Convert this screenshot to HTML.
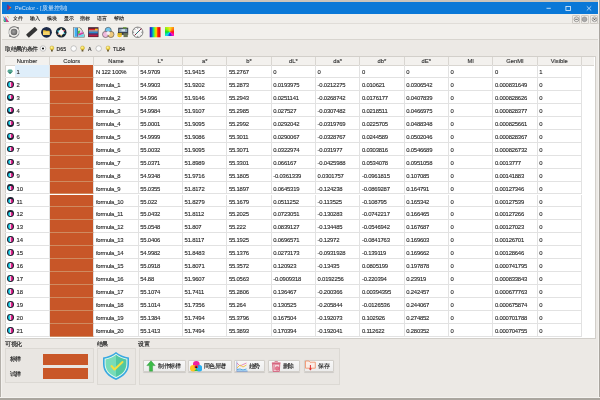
<!DOCTYPE html>
<html><head><meta charset="utf-8"><style>
html,body{margin:0;padding:0}
body{-webkit-text-stroke:0.13px currentColor;width:600px;height:400px;overflow:hidden;background:#c9c4bc;position:relative;font-family:"Liberation Sans",sans-serif;color:#1e1e1e}
#win{position:absolute;left:0;top:0;width:600px;height:400px;background:#ece9e5;overflow:hidden;will-change:transform}
.bd{position:absolute}
.abs{position:absolute}
#title{position:absolute;left:1.5px;top:1.5px;width:596.3px;height:12px;background:#0a78d7}
#title .t{-webkit-text-stroke:0;position:absolute;left:13.5px;top:3.6px;font-size:5.55px;color:#d8e8f8;white-space:nowrap;line-height:6px}
#menubar{position:absolute;left:1.5px;top:13.5px;width:597px;height:9.5px;background:#f0eeea;border-bottom:1px solid #e0ddd8}
.mi{position:absolute;top:2.5px;font-size:4.9px;line-height:5px;color:#222;white-space:nowrap}
#toolbar{position:absolute;left:1.5px;top:24px;width:596px;height:14.5px;background:#f2f0ec;border-bottom:1px solid #d8d5cf}
#tbl{position:absolute;left:0;top:0}
.frame{position:absolute;left:4.5px;top:56px;width:589px;height:280.5px;background:#fff;border:1px solid #d2cfca}
.hbar{position:absolute;left:5px;top:56.5px;width:589px;height:8.5px;background:#f3f1ee;border-bottom:1px solid #d9d6d1}
.hc{position:absolute;top:56.5px;height:8.5px;box-sizing:border-box;border-right:1px solid #d9d6d1;font-size:5.8px;line-height:8.7px;text-align:center;color:#333;white-space:nowrap}
.rw{position:absolute;left:5px;height:12.95px;width:589px}
.rw::after{content:"";position:absolute;left:0;top:11.95px;width:10px;height:1px;background:#e6e6e6}
.c{position:absolute;top:0;height:12.95px;box-sizing:border-box;border-right:1px solid #e2e2e2;border-bottom:1px solid #e2e2e2;font-size:5.5px;line-height:12.95px;padding-left:2px;white-space:nowrap;overflow:hidden;color:#2a2a2a;-webkit-text-stroke:0.12px #2a2a2a}
.sw{background:#c85628;border-bottom-color:#cf8a60}
.sel{background:#dfeefa}
.mdi{position:absolute;top:1.75px;width:6.4px;height:6.4px;border:0.5px solid #cfcbc5;border-radius:1px;background:#eeece8}
.mdi svg{position:absolute;left:-0.2px;top:-0.2px}
.opt{position:absolute;line-height:6px;letter-spacing:-0.62px;white-space:nowrap;color:#222}
.opt2{position:absolute;font-size:5.2px;line-height:5px;white-space:nowrap;color:#222}
.lbl{position:absolute;font-size:6px;letter-spacing:-0.5px;line-height:6px;white-space:nowrap;color:#2a2a2a;-webkit-text-stroke:0.16px #2a2a2a}
.grp{position:absolute;box-sizing:border-box;border:1px solid #dcd9d4;background:#e9e6e2}
.btn{position:absolute;top:359.6px;height:12.9px;box-sizing:border-box;border:0.8px solid #d2cfca;box-shadow:0 0.5px 0.8px rgba(0,0,0,0.12);border-radius:1px;background:linear-gradient(#f8f8f8,#ececec)}
.bt{position:absolute;top:362.6px;font-size:6px;letter-spacing:-0.45px;line-height:6px;white-space:nowrap;color:#222}
.rw i{position:absolute;left:1.5px;top:3.5px;width:7px;height:6px}
.gem{background:none}
.rw i.gem::before{content:"";position:absolute;left:0.6px;top:0.9px;width:6px;height:1.8px;background:#4aa890;clip-path:polygon(25% 0,75% 0,100% 100%,0 100%)}
.rw i.gem::after{content:"";position:absolute;left:0.6px;top:2.7px;width:6px;height:3px;background:#2e8a74;clip-path:polygon(0 0,100% 0,50% 100%)}
.rw i.ball{left:2.1px;top:2.9px;width:6.9px;height:6.9px;border-radius:50%;background:#1a2230}
.rw i.ball::before{content:"";position:absolute;left:1.2px;top:1.2px;width:4.5px;height:4.5px;border-radius:50%;background:linear-gradient(90deg,#2090c0 0,#20e0f0 30%,#30d0e8 45%,#f8c0e0 50%,#f02898 60%,#c01070 100%)}
.rw i.ball::after{content:"";position:absolute;left:2.9px;top:3.4px;width:1.2px;height:1.8px;border-radius:50%;background:#e8d0ec}

.c b{display:inline-block;font-weight:normal;font-size:5.9px;letter-spacing:-0.2px;transform:translate(-0.4px,0.5px)}

</style></head><body>
<div id="win">
<div class="bd" style="left:0;top:0;width:600px;height:1.5px;background:#c9c4bc"></div>
<div class="bd" style="left:0;top:0;width:2px;height:400px;background:#b4b0aa;border-right:1px solid #f4f2ef;box-sizing:border-box"></div>
<div class="bd" style="left:597.8px;top:0;width:2.2px;height:400px;background:#a9a59f;border-left:0.8px solid #f4f2ef;box-sizing:border-box"></div>
<div class="bd" style="left:0;top:397.3px;width:600px;height:2.7px;background:#aaa69f;border-top:0.9px solid #f4f2ef;box-sizing:border-box"></div>
<div id="title">
<svg class="abs" style="left:4.8px;top:2.2px" width="6" height="7" viewBox="0 0 6 7"><path d="M1.2 0.6 L5.4 3.5 L1.2 6.4 Z" fill="#e02830"/><path d="M1.2 0.6 L2.6 1.6 L2.6 5.4 L1.2 6.4 Z" fill="#4a3aa0"/><path d="M3.8 2.4 L5.4 3.5 L3.8 4.6 Z" fill="#f09020"/></svg>
<div class="t">PeColor - [质量控制]</div>
<svg class="abs" style="left:524px;top:2px" width="72" height="9" viewBox="0 0 72 9">
<path d="M20.5 4.3 H24.8" stroke="#e8f2fc" stroke-width="0.8"/>
<rect x="39.9" y="2.4" width="4.6" height="4.1" fill="none" stroke="#e8f2fc" stroke-width="0.8"/>
<path d="M60.8 2.3 L65.2 6.5 M65.2 2.3 L60.8 6.5" stroke="#e8f2fc" stroke-width="0.75"/>
</svg>
</div>
<div id="menubar">
<svg class="abs" style="left:0;top:1.5px" width="8" height="8" viewBox="0 0 8 8"><path d="M1 1 L3 7 L7 7 Z" fill="#2a8ad0"/><path d="M3 1 L7 7 L4 7 Z" fill="#d04080"/><path d="M1 4 L4 7 L2 7 Z" fill="#40b060"/><path d="M5 1 L7 4 L6 1 Z" fill="#e0a030"/></svg>
<span class="mi" style="left:11.5px">文件</span>
<span class="mi" style="left:28.5px">输入</span>
<span class="mi" style="left:45.2px">模块</span>
<span class="mi" style="left:62.2px">显示</span>
<span class="mi" style="left:78.8px">指标</span>
<span class="mi" style="left:95.5px">语言</span>
<span class="mi" style="left:112px">帮助</span>
<div class="mdi" style="left:570.6px"><svg width="7" height="7" viewBox="0 0 7 7"><circle cx="3.5" cy="3.3" r="2.4" fill="none" stroke="#555" stroke-width="0.5"/><path d="M2.2 3.3 H4.8" stroke="#333" stroke-width="0.7"/></svg></div>
<div class="mdi" style="left:579.1px"><svg width="7" height="7" viewBox="0 0 7 7"><circle cx="3.5" cy="3.3" r="2.4" fill="#aaa" stroke="#777" stroke-width="0.5"/></svg></div>
<div class="mdi" style="left:588.5px"><svg width="7" height="7" viewBox="0 0 7 7"><circle cx="3.5" cy="3.3" r="2.4" fill="none" stroke="#666" stroke-width="0.5"/><path d="M2.4 2.2 L4.6 4.4 M4.6 2.2 L2.4 4.4" stroke="#333" stroke-width="0.7"/></svg></div>
</div>
<div id="toolbar">
<svg class="abs" style="left:-1.5px;top:-0.5px" width="180" height="15" viewBox="0 23.5 180 15">
<defs>
<radialGradient id="g1" cx="0.45" cy="0.45" r="0.6"><stop offset="0" stop-color="#a0a0a0"/><stop offset="1" stop-color="#5e5e5e"/></radialGradient>
<linearGradient id="rb" x1="0" y1="0" x2="1" y2="0"><stop offset="0" stop-color="#3a10b0"/><stop offset="0.15" stop-color="#1040e0"/><stop offset="0.35" stop-color="#10e090"/><stop offset="0.5" stop-color="#b0f000"/><stop offset="0.62" stop-color="#ffd000"/><stop offset="0.75" stop-color="#ff2010"/><stop offset="1" stop-color="#e00010"/></linearGradient>
</defs>
<!-- 1 refresh -->
<path d="M17.6 27.6 A5.2 5.2 0 0 0 9.1 29.8" fill="none" stroke="#8a8a8a" stroke-width="1.1"/>
<path d="M10.4 35.4 A5.2 5.2 0 0 0 18.9 33.2" fill="none" stroke="#8a8a8a" stroke-width="1.1"/><path d="M9.1 29.8 A5.2 5.2 0 0 0 10.4 35.4" fill="none" stroke="#b0b0b0" stroke-width="0.9"/><path d="M18.9 33.2 A5.2 5.2 0 0 0 17.6 27.6" fill="none" stroke="#b0b0b0" stroke-width="0.9"/>
<path d="M16.8 26.4 L19 26.9 L18.2 29 Z" fill="#555"/>
<path d="M11.2 36.6 L9 36.1 L9.8 34 Z" fill="#555"/>
<circle cx="14" cy="31.5" r="3.3" fill="url(#g1)"/>
<!-- 2 bar -->
<rect x="25.8" y="29.6" width="12" height="4.3" rx="0.8" transform="rotate(-42 31.8 31.75)" fill="#353535"/>
<!-- 3 folder -->
<circle cx="46.5" cy="31.8" r="5.4" fill="#1c2a48"/>
<path d="M43 29.7 H45.2 L46 30.3 H49.6 V34.5 H43 Z" fill="#e8b830"/>
<path d="M43 31.2 H49.6 V34.5 H43 Z" fill="#f6d468"/>
<!-- 4 ring -->
<circle cx="61.20" cy="31.75" r="5.3" fill="#182634"/>
<path d="M59.70 30.14 L61.20 27.15 L62.70 30.14 Z" fill="#f4e8b0"/>
<path d="M61.84 29.65 L65.18 29.45 L63.34 32.24 Z" fill="#e85868"/>
<path d="M63.23 30.89 L65.52 33.32 L62.20 33.71 Z" fill="#48c8c8"/>
<path d="M62.70 33.36 L61.20 36.35 L59.70 33.36 Z" fill="#f0d070"/>
<path d="M60.74 33.90 L57.43 34.39 L59.02 31.44 Z" fill="#f0a890"/>
<path d="M59.17 32.61 L56.88 30.18 L60.20 29.79 Z" fill="#48d0e0"/>
<circle cx="61.20" cy="31.75" r="2.5" fill="#fbfbfb"/>
<!-- 5 fan deck -->
<path d="M73.3 26.4 L79.2 26.4 C81.5 27.8 83.6 31 84.6 34.5 L84.6 37 L73.3 37 Z" fill="#6a6a6a"/>
<path d="M74 27.1 L79 27.1 C81 28.4 82.9 31.2 83.9 34.6 L83.9 36.3 L74 36.3 Z" fill="#e4eef0"/>
<rect x="74.6" y="27.4" width="2.8" height="8.8" fill="#3eaef0"/>
<rect x="77.4" y="27.4" width="0.7" height="8.8" fill="#203060"/>
<path d="M78.1 27.3 L79.6 27.3 L80.8 29.8 L78.1 30.6 Z" fill="#f4f0b0"/>
<path d="M78.1 30.4 L80 30 L79.6 33.2 L78.1 33.4 Z" fill="#40c030"/>
<path d="M80.5 29.6 L82 31 L82.5 32.6 L80.2 32.5 Z" fill="#f0a8e8"/>
<path d="M78.1 33.4 L82.8 31.8 L83.4 33.5 L78.6 35.2 Z" fill="#d040a0"/>
<path d="M78.6 35.3 L83.5 33.6 L83.9 36.3 L78.6 36.3 Z" fill="#60d8e8"/>
<!-- 6 bars -->
<rect x="88.1" y="26.7" width="10.4" height="9.9" fill="#3a2030"/>
<rect x="88.8" y="28.2" width="9" height="1.6" fill="#e02828"/>
<rect x="95" y="28.2" width="2.8" height="1.6" fill="#f0c020"/>
<rect x="88.8" y="30" width="9" height="1" fill="#f0f0f0"/>
<rect x="88.8" y="31.2" width="9" height="1.8" fill="#2a8ad0"/>
<rect x="88.8" y="33.2" width="9" height="1" fill="#803080"/>
<rect x="88.8" y="34.4" width="9" height="1.6" fill="#c02040"/>
<!-- 7 cmy -->
<circle cx="108.2" cy="29.9" r="3.1" fill="#70c4f0" stroke="#4a4a4a" stroke-width="0.6"/>
<circle cx="105.6" cy="33.9" r="3.1" fill="#f0b4dc" stroke="#4a4a4a" stroke-width="0.6" fill-opacity="0.9"/>
<circle cx="110.9" cy="33.9" r="3.1" fill="#f0c470" stroke="#4a4a4a" stroke-width="0.6" fill-opacity="0.9"/>
<circle cx="108.2" cy="32.6" r="1.9" fill="#f4f0f4"/>
<!-- 8 scanner -->
<rect x="118.2" y="27.2" width="10" height="7.2" fill="#38404e"/>
<rect x="119.2" y="28.3" width="8" height="3.2" fill="#8aa4b8"/>
<rect x="121.5" y="28.8" width="3.5" height="2" fill="#d8e4ec"/>
<rect x="123" y="26.6" width="3.5" height="1.4" fill="#70a040"/>
<path d="M117.2 34.8 A2.4 2 0 0 0 122 34.8 Z" fill="#f0c010"/>
<rect x="117.5" y="32.4" width="4.3" height="2.4" fill="#d8b020"/>
<rect x="123.5" y="32.6" width="4.3" height="4" fill="#6a7458"/>
<rect x="118" y="31.4" width="1.2" height="1.2" fill="#303030"/>
<!-- 9 gauge -->
<circle cx="137.7" cy="31.8" r="5.2" fill="#f6f6f6" stroke="#6a6a6a" stroke-width="0.8"/>
<g stroke="#5a5a5a" stroke-width="0.7"><path d="M137.7 27 V28.2"/><path d="M137.7 35.4 V36.6"/><path d="M132.9 31.8 H134.1"/><path d="M141.3 31.8 H142.5"/><path d="M134.3 28.4 L135.1 29.2"/><path d="M134.3 35.2 L135.1 34.4"/><path d="M141.1 35.2 L140.3 34.4"/></g>
<path d="M135 34.5 L141.5 28" stroke="#8a2040" stroke-width="1"/>
<path d="M136.2 33.3 L138.7 30.8" stroke="#208080" stroke-width="1"/>
<!-- 10 rainbow -->
<rect x="149.7" y="26.6" width="10.8" height="10.2" fill="url(#rb)"/>
<!-- 11 square -->

</svg>
</div>
<div class="abs" style="left:164.7px;top:27.2px;width:9.6px;height:9px;background:conic-gradient(from 0deg at 55% 55%,#f8e020,#ff8010,#ff1010,#ff10c0,#2020e0,#10e0f0,#10e020,#a0f010,#f8e020)"></div>
<!-- options -->
<div class="opt" style="left:5.2px;top:45.8px;font-size:6px">取结果的条件</div>
<svg class="abs" style="left:38px;top:43px" width="95" height="11" viewBox="38 43 95 11">
<defs><radialGradient id="bulb" cx="0.4" cy="0.35" r="0.7"><stop offset="0" stop-color="#fff6a0"/><stop offset="1" stop-color="#e8c010"/></radialGradient></defs>
<circle cx="43" cy="48.5" r="2.75" fill="#fcfcfc" stroke="#8a8a8a" stroke-width="0.45"/>
<circle cx="43" cy="48.5" r="1.1" fill="#111"/>
<circle cx="73.7" cy="48.5" r="2.75" fill="#fcfcfc" stroke="#8a8a8a" stroke-width="0.45"/>
<circle cx="98.7" cy="48.5" r="2.75" fill="#fcfcfc" stroke="#8a8a8a" stroke-width="0.45"/>
<circle cx="51.9" cy="47.9" r="2" fill="url(#bulb)" stroke="#a08000" stroke-width="0.3"/><rect x="51" y="49.7" width="1.8" height="1.8" fill="#6a5a30"/>
<circle cx="82.5" cy="47.9" r="2" fill="url(#bulb)" stroke="#a08000" stroke-width="0.3"/><rect x="81.6" y="49.7" width="1.8" height="1.8" fill="#6a5a30"/>
<circle cx="108" cy="47.9" r="2" fill="url(#bulb)" stroke="#a08000" stroke-width="0.3"/><rect x="107.1" y="49.7" width="1.8" height="1.8" fill="#6a5a30"/>
</svg>
<div class="opt2" style="left:56.6px;top:47.2px">D65</div>
<div class="opt2" style="left:88px;top:47.2px">A</div>
<div class="opt2" style="left:113px;top:47.2px">TL84</div>
<div id="tbl">
<div class="frame"></div>
<div class="hbar"></div>
<div class="hc" style="left:5.00px;width:45.00px">Number</div>
<div class="hc" style="left:50.00px;width:44.33px">Colors</div>
<div class="hc" style="left:94.33px;width:44.33px">Name</div>
<div class="hc" style="left:138.66px;width:44.33px">L*</div>
<div class="hc" style="left:182.99px;width:44.33px">a*</div>
<div class="hc" style="left:227.32px;width:44.33px">b*</div>
<div class="hc" style="left:271.65px;width:44.33px">dL*</div>
<div class="hc" style="left:315.98px;width:44.33px">da*</div>
<div class="hc" style="left:360.31px;width:44.33px">db*</div>
<div class="hc" style="left:404.64px;width:44.33px">dE*</div>
<div class="hc" style="left:448.97px;width:44.33px">MI</div>
<div class="hc" style="left:493.30px;width:44.33px">GenMI</div>
<div class="hc" style="left:537.63px;width:44.33px">Visible</div>
<div class="rw" style="top:65.00px"><i class="gem"></i><span class="c num sel" style="left:10.00px;width:35.00px"><b>1</b></span><span class="c sw" style="left:45.00px;width:44.33px"></span><span class="c" style="left:89.33px;width:44.33px"><b>N 122 100%</b></span><span class="c" style="left:133.66px;width:44.33px"><b>54.9709</b></span><span class="c" style="left:177.99px;width:44.33px"><b>51.9415</b></span><span class="c" style="left:222.32px;width:44.33px"><b>55.2767</b></span><span class="c" style="left:266.65px;width:44.33px"><b>0</b></span><span class="c" style="left:310.98px;width:44.33px"><b>0</b></span><span class="c" style="left:355.31px;width:44.33px"><b>0</b></span><span class="c" style="left:399.64px;width:44.33px"><b>0</b></span><span class="c" style="left:443.97px;width:44.33px"><b>0</b></span><span class="c" style="left:488.30px;width:44.33px"><b>0</b></span><span class="c" style="left:532.63px;width:44.33px"><b>1</b></span></div>
<div class="rw" style="top:77.95px"><i class="ball"></i><span class="c num" style="left:10.00px;width:35.00px"><b>2</b></span><span class="c sw" style="left:45.00px;width:44.33px"></span><span class="c" style="left:89.33px;width:44.33px"><b>formula_1</b></span><span class="c" style="left:133.66px;width:44.33px"><b>54.9903</b></span><span class="c" style="left:177.99px;width:44.33px"><b>51.9202</b></span><span class="c" style="left:222.32px;width:44.33px"><b>55.2873</b></span><span class="c" style="left:266.65px;width:44.33px"><b>0.0193975</b></span><span class="c" style="left:310.98px;width:44.33px"><b>-0.0212275</b></span><span class="c" style="left:355.31px;width:44.33px"><b>0.010621</b></span><span class="c" style="left:399.64px;width:44.33px"><b>0.0306542</b></span><span class="c" style="left:443.97px;width:44.33px"><b>0</b></span><span class="c" style="left:488.30px;width:44.33px"><b>0.000831649</b></span><span class="c" style="left:532.63px;width:44.33px"><b>0</b></span></div>
<div class="rw" style="top:90.90px"><i class="ball"></i><span class="c num" style="left:10.00px;width:35.00px"><b>3</b></span><span class="c sw" style="left:45.00px;width:44.33px"></span><span class="c" style="left:89.33px;width:44.33px"><b>formula_2</b></span><span class="c" style="left:133.66px;width:44.33px"><b>54.996</b></span><span class="c" style="left:177.99px;width:44.33px"><b>51.9146</b></span><span class="c" style="left:222.32px;width:44.33px"><b>55.2943</b></span><span class="c" style="left:266.65px;width:44.33px"><b>0.0251141</b></span><span class="c" style="left:310.98px;width:44.33px"><b>-0.0268742</b></span><span class="c" style="left:355.31px;width:44.33px"><b>0.0176177</b></span><span class="c" style="left:399.64px;width:44.33px"><b>0.0407839</b></span><span class="c" style="left:443.97px;width:44.33px"><b>0</b></span><span class="c" style="left:488.30px;width:44.33px"><b>0.000828626</b></span><span class="c" style="left:532.63px;width:44.33px"><b>0</b></span></div>
<div class="rw" style="top:103.85px"><i class="ball"></i><span class="c num" style="left:10.00px;width:35.00px"><b>4</b></span><span class="c sw" style="left:45.00px;width:44.33px"></span><span class="c" style="left:89.33px;width:44.33px"><b>formula_3</b></span><span class="c" style="left:133.66px;width:44.33px"><b>54.9984</b></span><span class="c" style="left:177.99px;width:44.33px"><b>51.9107</b></span><span class="c" style="left:222.32px;width:44.33px"><b>55.2985</b></span><span class="c" style="left:266.65px;width:44.33px"><b>0.027527</b></span><span class="c" style="left:310.98px;width:44.33px"><b>-0.0307482</b></span><span class="c" style="left:355.31px;width:44.33px"><b>0.0218511</b></span><span class="c" style="left:399.64px;width:44.33px"><b>0.0466975</b></span><span class="c" style="left:443.97px;width:44.33px"><b>0</b></span><span class="c" style="left:488.30px;width:44.33px"><b>0.000828377</b></span><span class="c" style="left:532.63px;width:44.33px"><b>0</b></span></div>
<div class="rw" style="top:116.80px"><i class="ball"></i><span class="c num" style="left:10.00px;width:35.00px"><b>5</b></span><span class="c sw" style="left:45.00px;width:44.33px"></span><span class="c" style="left:89.33px;width:44.33px"><b>formula_4</b></span><span class="c" style="left:133.66px;width:44.33px"><b>55.0001</b></span><span class="c" style="left:177.99px;width:44.33px"><b>51.9095</b></span><span class="c" style="left:222.32px;width:44.33px"><b>55.2992</b></span><span class="c" style="left:266.65px;width:44.33px"><b>0.0292042</b></span><span class="c" style="left:310.98px;width:44.33px"><b>-0.0319769</b></span><span class="c" style="left:355.31px;width:44.33px"><b>0.0225705</b></span><span class="c" style="left:399.64px;width:44.33px"><b>0.0488348</b></span><span class="c" style="left:443.97px;width:44.33px"><b>0</b></span><span class="c" style="left:488.30px;width:44.33px"><b>0.000825661</b></span><span class="c" style="left:532.63px;width:44.33px"><b>0</b></span></div>
<div class="rw" style="top:129.75px"><i class="ball"></i><span class="c num" style="left:10.00px;width:35.00px"><b>6</b></span><span class="c sw" style="left:45.00px;width:44.33px"></span><span class="c" style="left:89.33px;width:44.33px"><b>formula_5</b></span><span class="c" style="left:133.66px;width:44.33px"><b>54.9999</b></span><span class="c" style="left:177.99px;width:44.33px"><b>51.9086</b></span><span class="c" style="left:222.32px;width:44.33px"><b>55.3011</b></span><span class="c" style="left:266.65px;width:44.33px"><b>0.0290067</b></span><span class="c" style="left:310.98px;width:44.33px"><b>-0.0328767</b></span><span class="c" style="left:355.31px;width:44.33px"><b>0.0244589</b></span><span class="c" style="left:399.64px;width:44.33px"><b>0.0502046</b></span><span class="c" style="left:443.97px;width:44.33px"><b>0</b></span><span class="c" style="left:488.30px;width:44.33px"><b>0.000828367</b></span><span class="c" style="left:532.63px;width:44.33px"><b>0</b></span></div>
<div class="rw" style="top:142.70px"><i class="ball"></i><span class="c num" style="left:10.00px;width:35.00px"><b>7</b></span><span class="c sw" style="left:45.00px;width:44.33px"></span><span class="c" style="left:89.33px;width:44.33px"><b>formula_6</b></span><span class="c" style="left:133.66px;width:44.33px"><b>55.0032</b></span><span class="c" style="left:177.99px;width:44.33px"><b>51.9095</b></span><span class="c" style="left:222.32px;width:44.33px"><b>55.3071</b></span><span class="c" style="left:266.65px;width:44.33px"><b>0.0322974</b></span><span class="c" style="left:310.98px;width:44.33px"><b>-0.031977</b></span><span class="c" style="left:355.31px;width:44.33px"><b>0.0303816</b></span><span class="c" style="left:399.64px;width:44.33px"><b>0.0546689</b></span><span class="c" style="left:443.97px;width:44.33px"><b>0</b></span><span class="c" style="left:488.30px;width:44.33px"><b>0.000826732</b></span><span class="c" style="left:532.63px;width:44.33px"><b>0</b></span></div>
<div class="rw" style="top:155.65px"><i class="ball"></i><span class="c num" style="left:10.00px;width:35.00px"><b>8</b></span><span class="c sw" style="left:45.00px;width:44.33px"></span><span class="c" style="left:89.33px;width:44.33px"><b>formula_7</b></span><span class="c" style="left:133.66px;width:44.33px"><b>55.0371</b></span><span class="c" style="left:177.99px;width:44.33px"><b>51.8989</b></span><span class="c" style="left:222.32px;width:44.33px"><b>55.3301</b></span><span class="c" style="left:266.65px;width:44.33px"><b>0.066167</b></span><span class="c" style="left:310.98px;width:44.33px"><b>-0.0425988</b></span><span class="c" style="left:355.31px;width:44.33px"><b>0.0534078</b></span><span class="c" style="left:399.64px;width:44.33px"><b>0.0951058</b></span><span class="c" style="left:443.97px;width:44.33px"><b>0</b></span><span class="c" style="left:488.30px;width:44.33px"><b>0.0013777</b></span><span class="c" style="left:532.63px;width:44.33px"><b>0</b></span></div>
<div class="rw" style="top:168.60px"><i class="ball"></i><span class="c num" style="left:10.00px;width:35.00px"><b>9</b></span><span class="c sw" style="left:45.00px;width:44.33px"></span><span class="c" style="left:89.33px;width:44.33px"><b>formula_8</b></span><span class="c" style="left:133.66px;width:44.33px"><b>54.9348</b></span><span class="c" style="left:177.99px;width:44.33px"><b>51.9716</b></span><span class="c" style="left:222.32px;width:44.33px"><b>55.1805</b></span><span class="c" style="left:266.65px;width:44.33px"><b>-0.0361339</b></span><span class="c" style="left:310.98px;width:44.33px"><b>0.0301757</b></span><span class="c" style="left:355.31px;width:44.33px"><b>-0.0961815</b></span><span class="c" style="left:399.64px;width:44.33px"><b>0.107085</b></span><span class="c" style="left:443.97px;width:44.33px"><b>0</b></span><span class="c" style="left:488.30px;width:44.33px"><b>0.00141883</b></span><span class="c" style="left:532.63px;width:44.33px"><b>0</b></span></div>
<div class="rw" style="top:181.55px"><i class="ball"></i><span class="c num" style="left:10.00px;width:35.00px"><b>10</b></span><span class="c sw" style="left:45.00px;width:44.33px"></span><span class="c" style="left:89.33px;width:44.33px"><b>formula_9</b></span><span class="c" style="left:133.66px;width:44.33px"><b>55.0355</b></span><span class="c" style="left:177.99px;width:44.33px"><b>51.8172</b></span><span class="c" style="left:222.32px;width:44.33px"><b>55.1897</b></span><span class="c" style="left:266.65px;width:44.33px"><b>0.0645319</b></span><span class="c" style="left:310.98px;width:44.33px"><b>-0.124238</b></span><span class="c" style="left:355.31px;width:44.33px"><b>-0.0869287</b></span><span class="c" style="left:399.64px;width:44.33px"><b>0.164791</b></span><span class="c" style="left:443.97px;width:44.33px"><b>0</b></span><span class="c" style="left:488.30px;width:44.33px"><b>0.00127346</b></span><span class="c" style="left:532.63px;width:44.33px"><b>0</b></span></div>
<div class="rw" style="top:194.50px"><i class="ball"></i><span class="c num" style="left:10.00px;width:35.00px"><b>11</b></span><span class="c sw" style="left:45.00px;width:44.33px"></span><span class="c" style="left:89.33px;width:44.33px"><b>formula_10</b></span><span class="c" style="left:133.66px;width:44.33px"><b>55.022</b></span><span class="c" style="left:177.99px;width:44.33px"><b>51.8279</b></span><span class="c" style="left:222.32px;width:44.33px"><b>55.1679</b></span><span class="c" style="left:266.65px;width:44.33px"><b>0.0511252</b></span><span class="c" style="left:310.98px;width:44.33px"><b>-0.113525</b></span><span class="c" style="left:355.31px;width:44.33px"><b>-0.108795</b></span><span class="c" style="left:399.64px;width:44.33px"><b>0.165342</b></span><span class="c" style="left:443.97px;width:44.33px"><b>0</b></span><span class="c" style="left:488.30px;width:44.33px"><b>0.00127539</b></span><span class="c" style="left:532.63px;width:44.33px"><b>0</b></span></div>
<div class="rw" style="top:207.45px"><i class="ball"></i><span class="c num" style="left:10.00px;width:35.00px"><b>12</b></span><span class="c sw" style="left:45.00px;width:44.33px"></span><span class="c" style="left:89.33px;width:44.33px"><b>formula_11</b></span><span class="c" style="left:133.66px;width:44.33px"><b>55.0432</b></span><span class="c" style="left:177.99px;width:44.33px"><b>51.8112</b></span><span class="c" style="left:222.32px;width:44.33px"><b>55.2025</b></span><span class="c" style="left:266.65px;width:44.33px"><b>0.0723051</b></span><span class="c" style="left:310.98px;width:44.33px"><b>-0.130283</b></span><span class="c" style="left:355.31px;width:44.33px"><b>-0.0742217</b></span><span class="c" style="left:399.64px;width:44.33px"><b>0.166465</b></span><span class="c" style="left:443.97px;width:44.33px"><b>0</b></span><span class="c" style="left:488.30px;width:44.33px"><b>0.00127266</b></span><span class="c" style="left:532.63px;width:44.33px"><b>0</b></span></div>
<div class="rw" style="top:220.40px"><i class="ball"></i><span class="c num" style="left:10.00px;width:35.00px"><b>13</b></span><span class="c sw" style="left:45.00px;width:44.33px"></span><span class="c" style="left:89.33px;width:44.33px"><b>formula_12</b></span><span class="c" style="left:133.66px;width:44.33px"><b>55.0548</b></span><span class="c" style="left:177.99px;width:44.33px"><b>51.807</b></span><span class="c" style="left:222.32px;width:44.33px"><b>55.222</b></span><span class="c" style="left:266.65px;width:44.33px"><b>0.0839127</b></span><span class="c" style="left:310.98px;width:44.33px"><b>-0.134485</b></span><span class="c" style="left:355.31px;width:44.33px"><b>-0.0546942</b></span><span class="c" style="left:399.64px;width:44.33px"><b>0.167687</b></span><span class="c" style="left:443.97px;width:44.33px"><b>0</b></span><span class="c" style="left:488.30px;width:44.33px"><b>0.00127023</b></span><span class="c" style="left:532.63px;width:44.33px"><b>0</b></span></div>
<div class="rw" style="top:233.35px"><i class="ball"></i><span class="c num" style="left:10.00px;width:35.00px"><b>14</b></span><span class="c sw" style="left:45.00px;width:44.33px"></span><span class="c" style="left:89.33px;width:44.33px"><b>formula_13</b></span><span class="c" style="left:133.66px;width:44.33px"><b>55.0406</b></span><span class="c" style="left:177.99px;width:44.33px"><b>51.8117</b></span><span class="c" style="left:222.32px;width:44.33px"><b>55.1925</b></span><span class="c" style="left:266.65px;width:44.33px"><b>0.0696571</b></span><span class="c" style="left:310.98px;width:44.33px"><b>-0.12972</b></span><span class="c" style="left:355.31px;width:44.33px"><b>-0.0841763</b></span><span class="c" style="left:399.64px;width:44.33px"><b>0.169603</b></span><span class="c" style="left:443.97px;width:44.33px"><b>0</b></span><span class="c" style="left:488.30px;width:44.33px"><b>0.00126701</b></span><span class="c" style="left:532.63px;width:44.33px"><b>0</b></span></div>
<div class="rw" style="top:246.30px"><i class="ball"></i><span class="c num" style="left:10.00px;width:35.00px"><b>15</b></span><span class="c sw" style="left:45.00px;width:44.33px"></span><span class="c" style="left:89.33px;width:44.33px"><b>formula_14</b></span><span class="c" style="left:133.66px;width:44.33px"><b>54.9982</b></span><span class="c" style="left:177.99px;width:44.33px"><b>51.8483</b></span><span class="c" style="left:222.32px;width:44.33px"><b>55.1376</b></span><span class="c" style="left:266.65px;width:44.33px"><b>0.0273173</b></span><span class="c" style="left:310.98px;width:44.33px"><b>-0.0931928</b></span><span class="c" style="left:355.31px;width:44.33px"><b>-0.139119</b></span><span class="c" style="left:399.64px;width:44.33px"><b>0.169662</b></span><span class="c" style="left:443.97px;width:44.33px"><b>0</b></span><span class="c" style="left:488.30px;width:44.33px"><b>0.00128646</b></span><span class="c" style="left:532.63px;width:44.33px"><b>0</b></span></div>
<div class="rw" style="top:259.25px"><i class="ball"></i><span class="c num" style="left:10.00px;width:35.00px"><b>16</b></span><span class="c sw" style="left:45.00px;width:44.33px"></span><span class="c" style="left:89.33px;width:44.33px"><b>formula_15</b></span><span class="c" style="left:133.66px;width:44.33px"><b>55.0918</b></span><span class="c" style="left:177.99px;width:44.33px"><b>51.8071</b></span><span class="c" style="left:222.32px;width:44.33px"><b>55.3572</b></span><span class="c" style="left:266.65px;width:44.33px"><b>0.120923</b></span><span class="c" style="left:310.98px;width:44.33px"><b>-0.13435</b></span><span class="c" style="left:355.31px;width:44.33px"><b>0.0805199</b></span><span class="c" style="left:399.64px;width:44.33px"><b>0.197878</b></span><span class="c" style="left:443.97px;width:44.33px"><b>0</b></span><span class="c" style="left:488.30px;width:44.33px"><b>0.000741795</b></span><span class="c" style="left:532.63px;width:44.33px"><b>0</b></span></div>
<div class="rw" style="top:272.20px"><i class="ball"></i><span class="c num" style="left:10.00px;width:35.00px"><b>17</b></span><span class="c sw" style="left:45.00px;width:44.33px"></span><span class="c" style="left:89.33px;width:44.33px"><b>formula_16</b></span><span class="c" style="left:133.66px;width:44.33px"><b>54.88</b></span><span class="c" style="left:177.99px;width:44.33px"><b>51.9607</b></span><span class="c" style="left:222.32px;width:44.33px"><b>55.0563</b></span><span class="c" style="left:266.65px;width:44.33px"><b>-0.0909318</b></span><span class="c" style="left:310.98px;width:44.33px"><b>0.0192256</b></span><span class="c" style="left:355.31px;width:44.33px"><b>-0.220394</b></span><span class="c" style="left:399.64px;width:44.33px"><b>0.23919</b></span><span class="c" style="left:443.97px;width:44.33px"><b>0</b></span><span class="c" style="left:488.30px;width:44.33px"><b>0.000833843</b></span><span class="c" style="left:532.63px;width:44.33px"><b>0</b></span></div>
<div class="rw" style="top:285.15px"><i class="ball"></i><span class="c num" style="left:10.00px;width:35.00px"><b>18</b></span><span class="c sw" style="left:45.00px;width:44.33px"></span><span class="c" style="left:89.33px;width:44.33px"><b>formula_17</b></span><span class="c" style="left:133.66px;width:44.33px"><b>55.1074</b></span><span class="c" style="left:177.99px;width:44.33px"><b>51.7411</b></span><span class="c" style="left:222.32px;width:44.33px"><b>55.2806</b></span><span class="c" style="left:266.65px;width:44.33px"><b>0.136467</b></span><span class="c" style="left:310.98px;width:44.33px"><b>-0.200366</b></span><span class="c" style="left:355.31px;width:44.33px"><b>0.00394395</b></span><span class="c" style="left:399.64px;width:44.33px"><b>0.242457</b></span><span class="c" style="left:443.97px;width:44.33px"><b>0</b></span><span class="c" style="left:488.30px;width:44.33px"><b>0.000677763</b></span><span class="c" style="left:532.63px;width:44.33px"><b>0</b></span></div>
<div class="rw" style="top:298.10px"><i class="ball"></i><span class="c num" style="left:10.00px;width:35.00px"><b>19</b></span><span class="c sw" style="left:45.00px;width:44.33px"></span><span class="c" style="left:89.33px;width:44.33px"><b>formula_18</b></span><span class="c" style="left:133.66px;width:44.33px"><b>55.1014</b></span><span class="c" style="left:177.99px;width:44.33px"><b>51.7356</b></span><span class="c" style="left:222.32px;width:44.33px"><b>55.264</b></span><span class="c" style="left:266.65px;width:44.33px"><b>0.130525</b></span><span class="c" style="left:310.98px;width:44.33px"><b>-0.205844</b></span><span class="c" style="left:355.31px;width:44.33px"><b>-0.0126536</b></span><span class="c" style="left:399.64px;width:44.33px"><b>0.244067</b></span><span class="c" style="left:443.97px;width:44.33px"><b>0</b></span><span class="c" style="left:488.30px;width:44.33px"><b>0.000675874</b></span><span class="c" style="left:532.63px;width:44.33px"><b>0</b></span></div>
<div class="rw" style="top:311.05px"><i class="ball"></i><span class="c num" style="left:10.00px;width:35.00px"><b>20</b></span><span class="c sw" style="left:45.00px;width:44.33px"></span><span class="c" style="left:89.33px;width:44.33px"><b>formula_19</b></span><span class="c" style="left:133.66px;width:44.33px"><b>55.1384</b></span><span class="c" style="left:177.99px;width:44.33px"><b>51.7494</b></span><span class="c" style="left:222.32px;width:44.33px"><b>55.3796</b></span><span class="c" style="left:266.65px;width:44.33px"><b>0.167504</b></span><span class="c" style="left:310.98px;width:44.33px"><b>-0.192073</b></span><span class="c" style="left:355.31px;width:44.33px"><b>0.102926</b></span><span class="c" style="left:399.64px;width:44.33px"><b>0.274852</b></span><span class="c" style="left:443.97px;width:44.33px"><b>0</b></span><span class="c" style="left:488.30px;width:44.33px"><b>0.000701788</b></span><span class="c" style="left:532.63px;width:44.33px"><b>0</b></span></div>
<div class="rw" style="top:324.00px"><i class="ball"></i><span class="c num" style="left:10.00px;width:35.00px"><b>21</b></span><span class="c sw" style="left:45.00px;width:44.33px"></span><span class="c" style="left:89.33px;width:44.33px"><b>formula_20</b></span><span class="c" style="left:133.66px;width:44.33px"><b>55.1413</b></span><span class="c" style="left:177.99px;width:44.33px"><b>51.7494</b></span><span class="c" style="left:222.32px;width:44.33px"><b>55.3893</b></span><span class="c" style="left:266.65px;width:44.33px"><b>0.170394</b></span><span class="c" style="left:310.98px;width:44.33px"><b>-0.192041</b></span><span class="c" style="left:355.31px;width:44.33px"><b>0.112622</b></span><span class="c" style="left:399.64px;width:44.33px"><b>0.280352</b></span><span class="c" style="left:443.97px;width:44.33px"><b>0</b></span><span class="c" style="left:488.30px;width:44.33px"><b>0.000704755</b></span><span class="c" style="left:532.63px;width:44.33px"><b>0</b></span></div>
</div>
<div class="lbl" style="left:5px;top:340.8px">可视化</div>
<div class="grp" style="left:5.3px;top:348.4px;width:88.4px;height:35px"></div>
<div class="lbl" style="left:9.9px;top:356.3px">标样</div>
<div class="lbl" style="left:9.9px;top:370.6px">试样</div>
<div class="abs" style="left:43.4px;top:353.6px;width:45px;height:11.1px;background:#c95728"></div>
<div class="abs" style="left:43.4px;top:367.6px;width:45px;height:11.1px;background:#c95728"></div>
<div class="lbl" style="left:96.7px;top:340.8px">结果</div>
<div class="grp" style="left:97px;top:348.3px;width:38.8px;height:36.5px"></div>
<svg class="abs" style="left:103px;top:352px" width="26" height="28" viewBox="0 0 26 28">
<path d="M13 0 C9.5 3 5 4.8 0 5.6 L0 12 C0 20 5.5 24.8 13 28 C20.5 24.8 26 20 26 12 L26 5.6 C21 4.8 16.5 3 13 0 Z" fill="#38a8e0"/>
<path d="M13 1.8 C9.8 4.4 5.8 6 1.6 6.8 L1.6 12 C1.6 19 6.5 23.4 13 26.2 C19.5 23.4 24.4 19 24.4 12 L24.4 6.8 C20.2 6 16.2 4.4 13 1.8 Z" fill="#e0f8f0"/>
<path d="M13 2.8 C10 5.2 6.4 6.8 2.6 7.6 L2.6 12 C2.6 18.4 7 22.4 13 25.1 Z" fill="#78dcb8"/>
<path d="M13 2.8 C16 5.2 19.6 6.8 23.4 7.6 L23.4 12 C23.4 18.4 19 22.4 13 25.1 Z" fill="#52c8a0"/>
<path d="M8.5 14 L11.5 17.5 L19.5 10" fill="none" stroke="#f2e040" stroke-width="2" stroke-linecap="round" stroke-linejoin="round"/>
</svg>
<div class="lbl" style="left:138.3px;top:340.8px">设置</div>
<div class="grp" style="left:138.8px;top:348.3px;width:201.2px;height:36.4px"></div>
<div class="btn" style="left:143.3px;width:42.5px"></div>
<svg class="abs" style="left:146px;top:360px" width="10" height="12" viewBox="0 0 10 12"><path d="M5 0.8 L9.2 5.6 L6.6 5.6 L6.6 11.2 L3.4 11.2 L3.4 5.6 L0.8 5.6 Z" fill="#3cbc48" stroke="#2a8a38" stroke-width="0.4"/></svg>
<div class="bt" style="left:158px">制作标样</div>
<div class="btn" style="left:188.1px;width:43.7px"></div>
<svg class="abs" style="left:189px;top:359.5px" width="13" height="13" viewBox="0 0 13 13">
<circle cx="7.3" cy="4.2" r="3.3" fill="#f020a0"/>
<circle cx="4.3" cy="8.3" r="3.3" fill="#ffc010" fill-opacity="0.92"/>
<circle cx="10.1" cy="8.3" r="3.3" fill="#10a8f0" fill-opacity="0.9"/>
<path d="M5.6 6 L7.3 4.8 L8.9 6 L9 8 L5.5 8 Z" fill="#ff3040"/>
<path d="M7.2 9 L5.2 11 L9 11 Z" fill="#30c040"/>
<circle cx="7.2" cy="7.2" r="1" fill="#202020"/>
</svg>
<div class="bt" style="left:203.5px">同色异谱</div>
<div class="btn" style="left:233.75px;width:31.25px"></div>
<svg class="abs" style="left:236px;top:360.5px" width="12" height="11" viewBox="0 0 12 11">
<path d="M0.8 0.3 V10.5 H11.5" fill="none" stroke="#7080c0" stroke-width="0.6"/>
<path d="M1 2 L4 5 L7 3.5 L10.5 2" fill="none" stroke="#e060a0" stroke-width="0.7"/>
<path d="M1 7 L4 4 L7 6 L10.5 4" fill="none" stroke="#f0c040" stroke-width="0.9"/>
<path d="M1 8.5 L4 8 L7 9 L10.5 8" fill="none" stroke="#40a0e0" stroke-width="0.9"/>
<rect x="1" y="9" width="10.5" height="1.4" fill="#80c0f0" opacity="0.7"/>
</svg>
<div class="bt" style="left:248.75px">趋势</div>
<div class="btn" style="left:268.3px;width:31.7px"></div>
<svg class="abs" style="left:270.5px;top:360.5px" width="11" height="11" viewBox="0 0 11 11">
<path d="M3.6 1.2 L4.2 0.3 H6.2 L6.8 1.2" fill="none" stroke="#c84060" stroke-width="0.7"/>
<rect x="0.8" y="1.4" width="8.8" height="1.3" rx="0.4" fill="#d04a68"/>
<path d="M1.6 3.1 H8.8 L8.3 10.4 H2.1 Z" fill="#f4d8de" stroke="#d04a68" stroke-width="0.8"/>
<circle cx="6.2" cy="7.4" r="1.9" fill="#e87890" stroke="#c84060" stroke-width="0.4"/>
<path d="M3.2 4 V9" stroke="#d04a68" stroke-width="0.6"/>
</svg>
<div class="bt" style="left:282.5px">删除</div>
<div class="btn" style="left:303.75px;width:30.45px"></div>
<svg class="abs" style="left:305px;top:360.3px" width="11" height="11" viewBox="0 0 11 11">
<path d="M0.5 1 H4 L5 2.2 H10.3 V8.2 H0.5 Z" fill="#fbeee8" stroke="#f08a60" stroke-width="0.8"/>
<path d="M5.4 5 V9.5" stroke="#e03030" stroke-width="1"/>
<path d="M3.8 8.4 L5.4 10.6 L7 8.4 Z" fill="#e03030"/>
</svg>
<div class="bt" style="left:318px">保存</div>
</div>
</body></html>
